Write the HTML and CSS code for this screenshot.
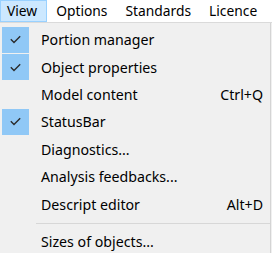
FILE: index.html
```html
<!DOCTYPE html>
<html lang="en">
<head>
    <meta charset="UTF-8">
    <title>View menu</title>
    <link rel="stylesheet" href="styles.css">
</head>
<body>

<nav class="menubar">
    <span class="menubar-item active">View</span>
    <span class="menubar-item">Options</span>
    <span class="menubar-item">Standards</span>
    <span class="menubar-item">Licence</span>
</nav>

<!-- Menu desplegable -->
<ul class="menu">
    <li class="menu-item checked">
        <span class="check"><svg width="11" height="9" viewBox="0 0 11 9"><polyline points="0.8,4.2 4,7.4 10.2,1.2"/></svg></span>
        <span class="label">Portion manager</span>
    </li>
    <li class="menu-item checked">
        <span class="check"><svg width="11" height="9" viewBox="0 0 11 9"><polyline points="0.8,4.2 4,7.4 10.2,1.2"/></svg></span>
        <span class="label">Object properties</span>
    </li>
    <li class="menu-item">
        <span class="check"></span>
        <span class="label">Model content</span>
        <span class="shortcut">Ctrl+Q</span>
    </li>
    <li class="menu-item checked">
        <span class="check"><svg width="11" height="9" viewBox="0 0 11 9"><polyline points="0.8,4.2 4,7.4 10.2,1.2"/></svg></span>
        <span class="label">StatusBar</span>
    </li>
    <li class="menu-item">
        <span class="check"></span>
        <span class="label">Diagnostics...</span>
    </li>
    <li class="menu-item">
        <span class="check"></span>
        <span class="label">Analysis feedbacks...</span>
    </li>
    <li class="menu-item">
        <span class="check"></span>
        <span class="label">Descript editor</span>
        <span class="shortcut">Alt+D</span>
    </li>
    <li class="separator"></li>
    <li class="menu-item">
        <span class="check"></span>
        <span class="label">Sizes of objects...</span>
    </li>
</ul>

</body>
</html>
```

FILE: styles.css
```css
/* Estilos generales */
body {
    margin: 0;
    padding: 0;
    background-color: #f0f0f0;
    color: #000;
    font-family: "Noto Sans", "Open Sans", sans-serif;
    font-size: 14.2px;
    overflow: hidden;
}

.menubar {
    display: flex;
    height: 22px;
    background-color: #fff;
    border-bottom: 1px solid #dadada;
    font-size: 13.8px;
}

.menubar-item {
    display: flex;
    align-items: center;
    padding: 0 8px;
    line-height: 20px;
    border: 1px solid transparent;
}

.menubar-item:first-child {
    padding-left: 6px;
    padding-right: 9px;
}

.menubar-item.active {
    background-color: #cce8ff;
    border-color: #99d1ff;
}

.menu {
    list-style: none;
    margin: 0;
    padding: 3px 0 0;
    border-right: 1px solid #d4d4d4;
    width: 270px;
    height: 230px;
}

.menu-item {
    display: flex;
    align-items: center;
    height: 27.4px;
    padding-right: 7px;
}

.check {
    width: 27px;
    height: 26px;
    margin: 0 12px 0 2px;
    display: flex;
    align-items: center;
    justify-content: center;
    box-sizing: border-box;
}

.checked .check {
    background-color: #90c8f6;
}

.check polyline {
    fill: none;
    stroke: #2b2b2b;
    stroke-width: 1.4;
}

.label {
    flex: 1;
}

.shortcut {
    text-align: right;
}

.separator {
    height: 1px;
    background-color: #d7d7d7;
    margin: 5px 0 4px 36px;
}
```
